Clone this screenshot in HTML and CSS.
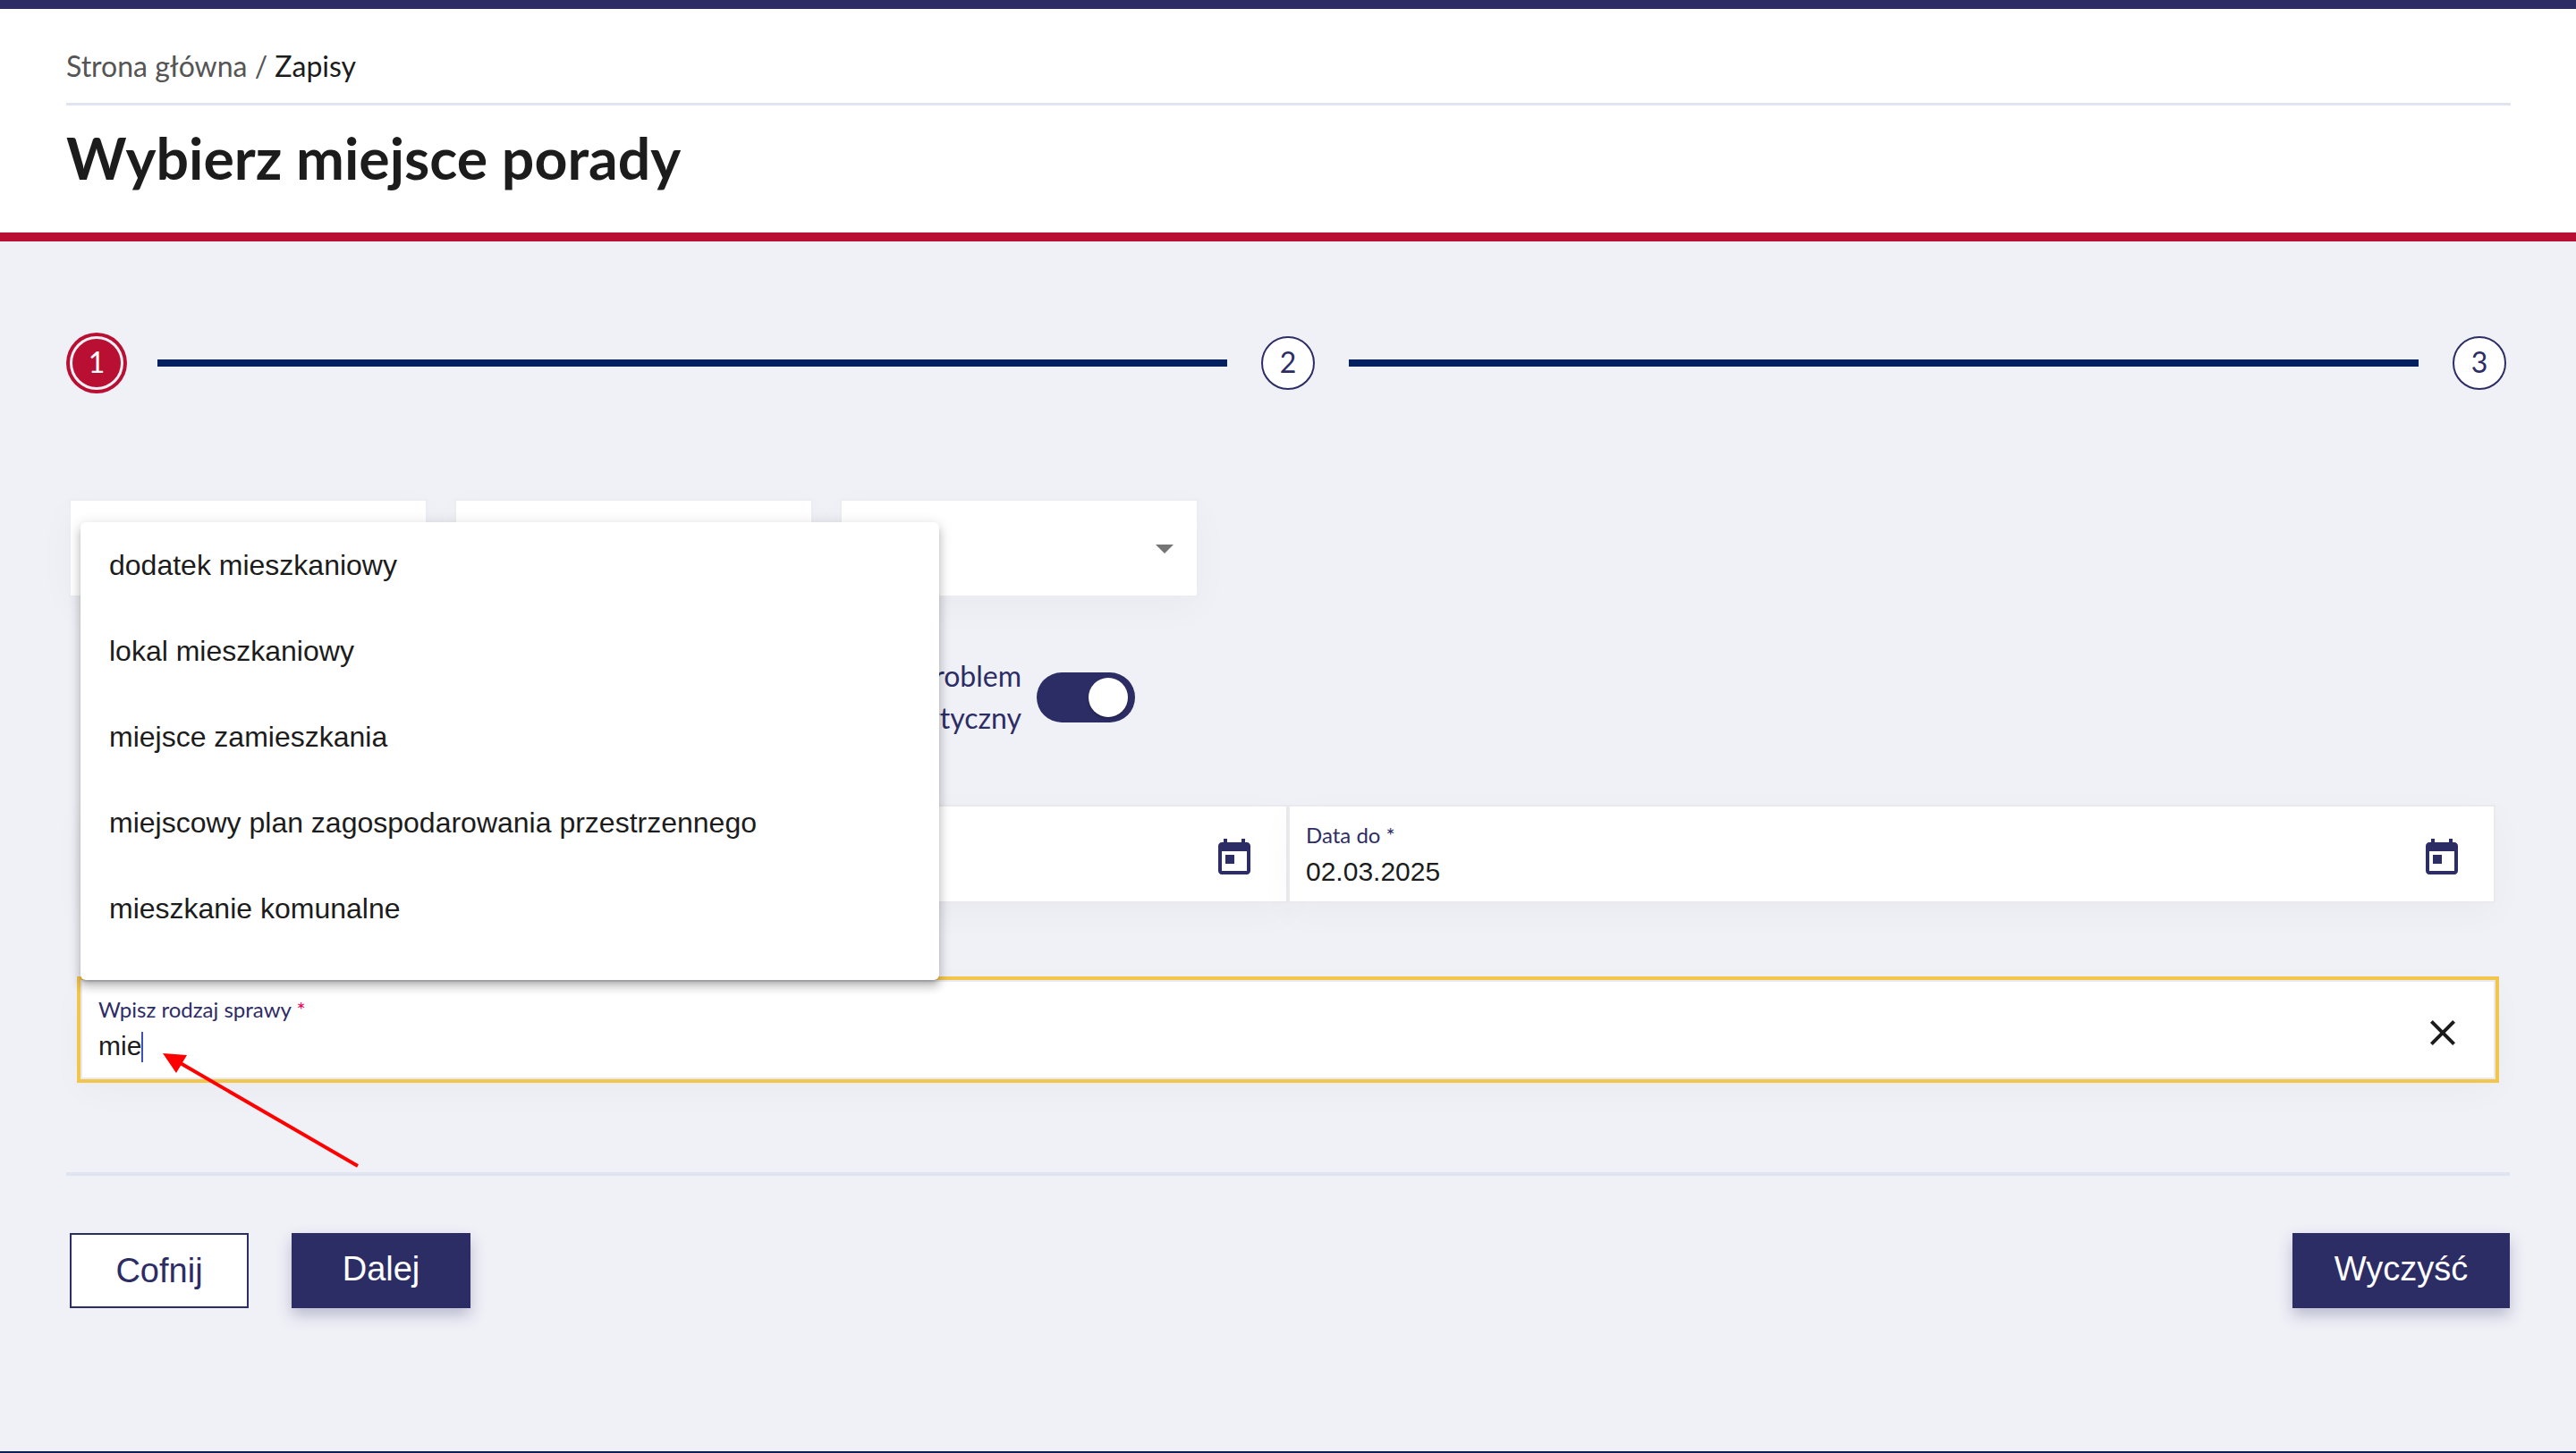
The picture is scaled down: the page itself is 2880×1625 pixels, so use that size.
FILE: index.html
```html
<!DOCTYPE html>
<html lang="pl">
<head>
  <meta charset="utf-8">
  <title>Wybierz miejsce porady</title>
  <link rel="stylesheet" href="styles.css">
</head>
<body>

<header class="header">
  <div class="breadcrumb"><span class="crumb-link">Strona główna /</span> Zapisy</div>
  <h1>Wybierz miejsce porady</h1>
</header>

<main class="main">
  <div class="steps">
    <div class="step active">1</div>
    <div class="step-line"></div>
    <div class="step">2</div>
    <div class="step-line"></div>
    <div class="step">3</div>
  </div>

  <div class="selects">
    <div class="card"></div>
    <div class="card"></div>
    <div class="card"><span class="caret-down"></span></div>
    <div></div>
    <div></div>
    <div class="toggle-row">
      <div class="toggle-label">Problem<br>krytyczny</div>
      <div class="switch"><div class="knob"></div></div>
    </div>
  </div>

  <div class="dates">
    <div class="field">
      <svg class="icon" viewBox="0 0 24 24"><path d="M19 3h-1V1h-2v2H8V1H6v2H5c-1.11 0-1.99.9-1.99 2L3 19c0 1.1.89 2 2 2h14c1.1 0 2-.9 2-2V5c0-1.1-.9-2-2-2zm0 16H5V8h14v11zM7 10h5v5H7z"/></svg>
    </div>
    <div class="field">
      <div>
        <label>Data do *</label>
        <div class="value">02.03.2025</div>
      </div>
      <svg class="icon" viewBox="0 0 24 24"><path d="M19 3h-1V1h-2v2H8V1H6v2H5c-1.11 0-1.99.9-1.99 2L3 19c0 1.1.89 2 2 2h14c1.1 0 2-.9 2-2V5c0-1.1-.9-2-2-2zm0 16H5V8h14v11zM7 10h5v5H7z"/></svg>
    </div>
  </div>

  <div class="search field">
    <div>
      <label>Wpisz rodzaj sprawy <span class="req">*</span></label>
      <div class="value">mie<span class="text-caret"></span></div>
    </div>
    <svg class="icon close" viewBox="0 0 24 24"><path d="M19 6.41L17.59 5 12 10.59 6.41 5 5 6.41 10.59 12 5 17.59 6.41 19 12 13.41 17.59 19 19 17.59 13.41 12z"/></svg>
  </div>

  <div class="actions">
    <button class="btn outline">Cofnij</button>
    <button class="btn">Dalej</button>
    <button class="btn clear">Wyczyść</button>
  </div>

  <ul class="menu">
    <li>dodatek mieszkaniowy</li>
    <li>lokal mieszkaniowy</li>
    <li>miejsce zamieszkania</li>
    <li>miejscowy plan zagospodarowania przestrzennego</li>
    <li>mieszkanie komunalne</li>
  </ul>

  <svg class="arrow" viewBox="0 0 240 140">
    <line x1="230" y1="134" x2="30" y2="18" stroke="#ff0000" stroke-width="4"/>
    <polygon points="12,8 39,10 27,30" fill="#ff0000"/>
  </svg>
</main>

</body>
</html>
```

FILE: styles.css
```css
* { box-sizing: border-box; }
body { margin: 0; background: #f0f1f7; font-family: "Lato", sans-serif; color: #2d2d66; min-height: 1625px; border-bottom: 2px solid #0a1f5c; }

.header { background: #fff; border-top: 10px solid #2d2d66; border-bottom: 10px solid #b90f33; height: 270px; padding: 0 73px 0 74px; }
.breadcrumb { font-size: 32px; line-height: 40px; padding: 44px 0 20px; border-bottom: 3px solid #e0e4f0; color: #1c1c1c; height: 108px; }
.crumb-link { color: #555; }
h1 { margin: 0; font-size: 64.4px; line-height: 80px; padding-top: 18px; font-weight: 700; color: #1c1c1c; }

.main { position: relative; }

.steps { display: flex; align-items: center; gap: 38px; padding: 106px 78px 0 78px; }
.step { width: 60px; height: 60px; border-radius: 50%; border: 2px solid #2d2d66; background: #fff; display: flex; align-items: center; justify-content: center; font-size: 32px; padding-bottom: 3px; color: #2d2d66; flex: none; }
.step.active { background: #b90f33; color: #fff; border: 3px solid #f0f1f7; box-shadow: 0 0 0 4px #b90f33; }
.step-line { flex: 1; height: 8px; background: #05205e; }

.selects { display: grid; grid-template-columns: repeat(3, 401px); column-gap: 30px; row-gap: 84px; padding: 122px 0 0 77px; }
.card { height: 110px; background: #fff; border: 2px solid #ecedf2; box-shadow: 0 12px 40px rgba(0, 0, 20, 0.03); display: flex; align-items: center; justify-content: flex-end; padding-right: 26px; }
.caret-down { width: 0; height: 0; border-left: 10px solid transparent; border-right: 10px solid transparent; border-top: 10px solid #757575; margin-top: 2px; }

.toggle-row { display: flex; align-items: center; gap: 17px; height: 56px; }
.toggle-label { width: 203px; text-align: right; font-size: 32px; line-height: 47px; margin-top: -2px; }
.switch { width: 110px; height: 56px; border-radius: 28px; background: #2d2d66; padding: 6px 8px; display: flex; justify-content: flex-end; }
.knob { width: 44px; height: 44px; border-radius: 50%; background: #fff; box-shadow: 0 2px 3px rgba(0, 0, 0, 0.25); }

.dates { display: grid; grid-template-columns: 1350px 1350px; padding: 92px 0 0 90px; }
.dates .field > div { padding-top: 3px; }
.field { height: 110px; background: #fff; border: 2px solid #e9e9ee; box-shadow: 0 12px 40px rgba(0, 0, 20, 0.03); display: flex; align-items: center; justify-content: flex-end; padding: 0 34px 0 18px; }
.field > div { flex: 1; }
.field label { display: block; font-size: 24px; line-height: 30px; }
.value { font-family: "Liberation Sans", sans-serif; font-size: 30px; line-height: 40px; margin-top: 6px; color: #1c1c1c; }
.req { color: #f50057; }
.icon { width: 48px; height: 48px; fill: #2d2d66; flex: none; margin-top: 10px; }
.icon.close { fill: #1c1c1c; margin: 7px -1px 0 0; }

.search { width: 2700px; height: 111px; margin: 86px 0 0 90px; outline: 4px solid #f2c54b; }
.text-caret { display: inline-block; width: 2px; height: 34px; background: #3f51b5; vertical-align: -8px; }

.actions { display: flex; gap: 48px; margin: 104px 74px 0 78px; padding-top: 68px; position: relative; }
.actions::before { content: ""; position: absolute; top: 0; left: -4px; right: 0; height: 4px; background: #dfe4f0; }
.btn { width: 200px; height: 84px; border: none; background: #2d2d66; color: #fff; font-family: "Liberation Sans", sans-serif; font-size: 38px; box-shadow: 0 8px 16px rgba(45, 45, 102, 0.28); padding: 0 0 4px; }
.btn.outline { background: #fff; color: #2d2d66; border: 2px solid #2d2d66; box-shadow: none; padding: 0; }
.btn.clear { width: 243px; margin-left: auto; }

.menu { position: absolute; left: 90px; top: 314px; width: 960px; height: 512px; margin: 0; padding: 0; list-style: none; background: #fff; border-radius: 6px; box-shadow: 0 5px 5px -3px rgba(0, 0, 0, 0.2), 0 8px 10px 1px rgba(0, 0, 0, 0.14), 0 3px 14px 2px rgba(0, 0, 0, 0.12); font-family: "Liberation Sans", sans-serif; font-size: 32px; color: #1c1c1c; }
.menu li { height: 96px; line-height: 96px; padding-left: 32px; }

.arrow { position: absolute; left: 170px; top: 900px; width: 240px; height: 140px; }
```
